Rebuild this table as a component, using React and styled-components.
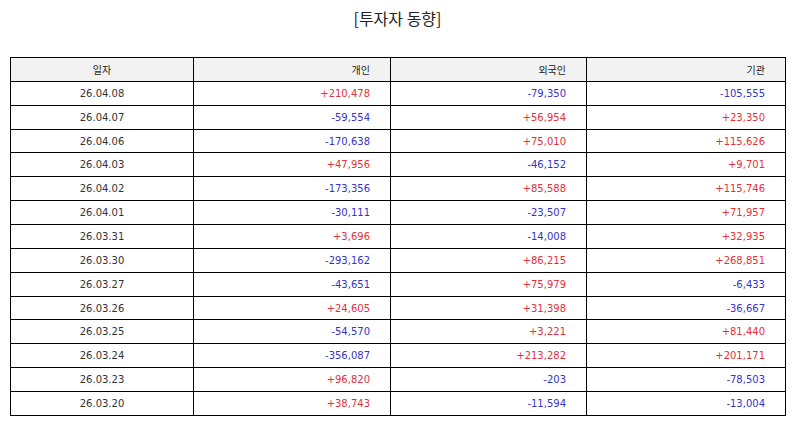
import React from "react";
import styled, { createGlobalStyle } from "styled-components";

const Global = createGlobalStyle`
  html, body { margin: 0; padding: 0; background: #fff; }
  body { font-family: "DejaVu Sans", "Noto Sans CJK KR", sans-serif; }
`;

const Page = styled.div`
  width: 794px;
  padding: 0 9px 0 10px;
  box-sizing: border-box;
`;

const Title = styled.h1`
  margin: 0;
  height: 57px;
  padding-top: 6px;
  box-sizing: border-box;
  text-align: center;
  font-family: "Noto Sans CJK KR", sans-serif;
  font-weight: 400;
  font-size: 16px;
  line-height: 24px;
  color: #222;
`;

const Table = styled.table`
  width: 775px;
  border-collapse: collapse;
  table-layout: fixed;
  font-size: 10px;
  color: #333;
`;

const Row = styled.tr`
  height: 23.87px;
`;

const HeadCell = styled.th`
  border: 1px solid #000;
  background: #f2f2f2;
  font-weight: 400;
  font-family: "Noto Sans CJK KR", sans-serif;
  font-size: 10px;
  color: #222;
  padding: 0 20px;
  text-align: ${(p) => (p.$center ? "center" : "right")};
`;

const Cell = styled.td`
  border: 1px solid #000;
  padding: 0 20px;
  text-align: ${(p) => (p.$center ? "center" : "right")};
  color: ${(p) =>
    p.$tone === "up" ? "#e3303a" : p.$tone === "down" ? "#3434c8" : "#333"};
`;

const rows = [
  ["26.04.08", "+210,478", "-79,350", "-105,555"],
  ["26.04.07", "-59,554", "+56,954", "+23,350"],
  ["26.04.06", "-170,638", "+75,010", "+115,626"],
  ["26.04.03", "+47,956", "-46,152", "+9,701"],
  ["26.04.02", "-173,356", "+85,588", "+115,746"],
  ["26.04.01", "-30,111", "-23,507", "+71,957"],
  ["26.03.31", "+3,696", "-14,008", "+32,935"],
  ["26.03.30", "-293,162", "+86,215", "+268,851"],
  ["26.03.27", "-43,651", "+75,979", "-6,433"],
  ["26.03.26", "+24,605", "+31,398", "-36,667"],
  ["26.03.25", "-54,570", "+3,221", "+81,440"],
  ["26.03.24", "-356,087", "+213,282", "+201,171"],
  ["26.03.23", "+96,820", "-203", "-78,503"],
  ["26.03.20", "+38,743", "-11,594", "-13,004"],
];

const tone = (v) => (v.startsWith("+") ? "up" : v.startsWith("-") ? "down" : "");

export default function App() {
  return (
    <Page>
      <Global />
      <Title>[투자자 동향]</Title>
      <Table>
        <colgroup>
          <col style={{ width: 183 }} />
          <col style={{ width: 197 }} />
          <col style={{ width: 196 }} />
          <col style={{ width: 199 }} />
        </colgroup>
        <thead>
          <Row>
            <HeadCell $center>일자</HeadCell>
            <HeadCell>개인</HeadCell>
            <HeadCell>외국인</HeadCell>
            <HeadCell>기관</HeadCell>
          </Row>
        </thead>
        <tbody>
          {rows.map((r) => (
            <Row key={r[0]}>
              <Cell $center>{r[0]}</Cell>
              <Cell $tone={tone(r[1])}>{r[1]}</Cell>
              <Cell $tone={tone(r[2])}>{r[2]}</Cell>
              <Cell $tone={tone(r[3])}>{r[3]}</Cell>
            </Row>
          ))}
        </tbody>
      </Table>
    </Page>
  );
}
